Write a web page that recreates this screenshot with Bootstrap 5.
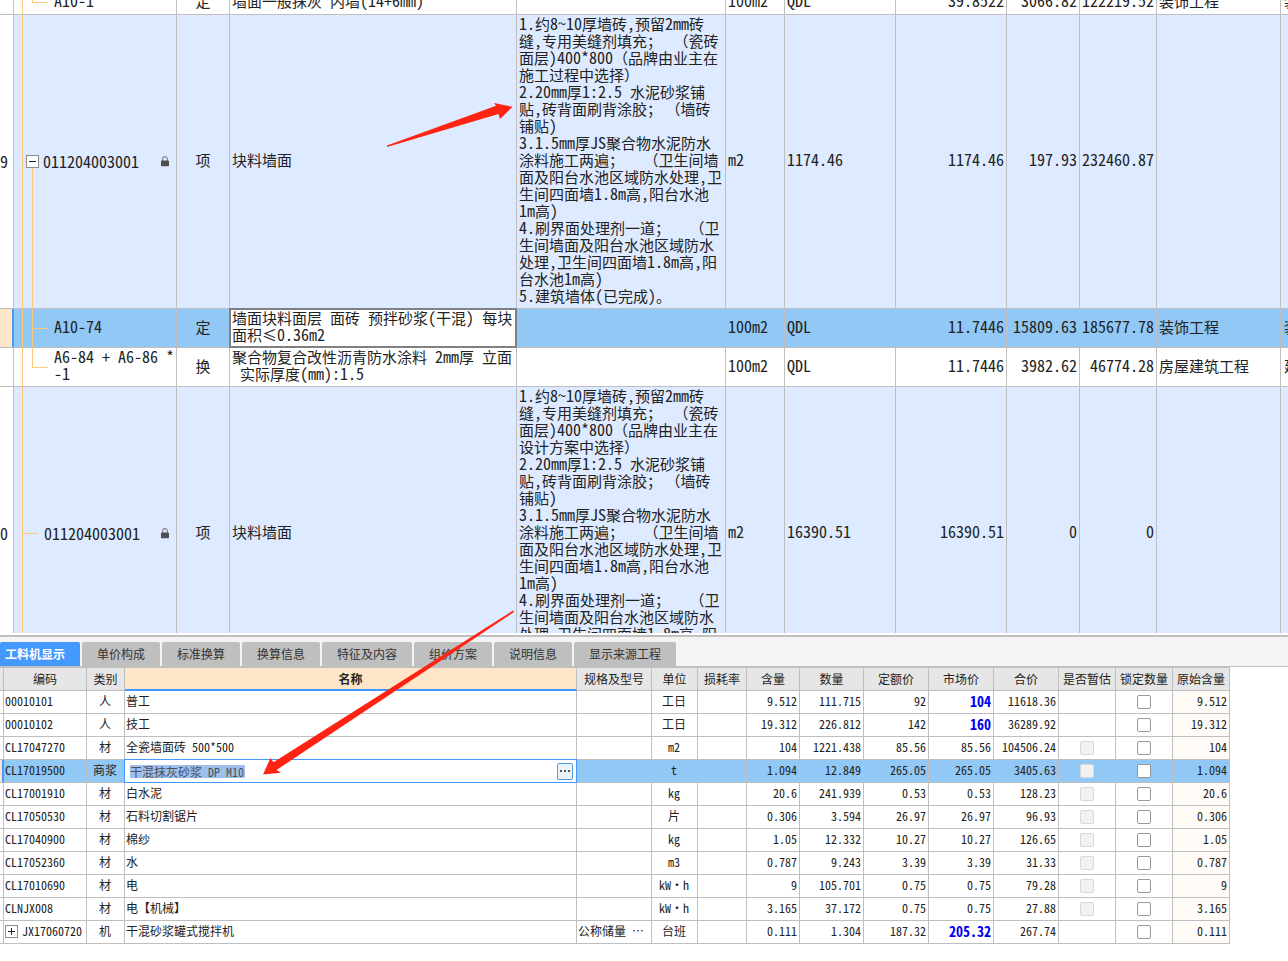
<!DOCTYPE html>
<html lang="zh-CN">
<head>
<meta charset="utf-8">
<meta name="viewport" content="width=device-width, initial-scale=1">
<title>工程计价</title>
<link rel="stylesheet" href="https://cdn.jsdelivr.net/npm/bootstrap@5.3.0/dist/css/bootstrap.min.css">
<style>
:root { --line:#bfbfbf; --ink:#222; --sel:#91c8f6; --accent:#4499ff; --branch:#ffc97d; --peach:#ffe6c8; }
body { font-family:"Noto Sans Mono CJK SC","Noto Sans CJK SC",sans-serif; color:var(--ink); background:#fff; }
.sheet { table-layout:fixed; border-collapse:separate; border-spacing:0; white-space:pre; }
.sheet td, .sheet th { border:0 solid var(--line); border-width:0 1px 1px 0; overflow:hidden; vertical-align:middle; font-weight:400; }

/* bill of quantities */
.bill { font-family:"Noto Sans CJK SC",sans-serif; font-size:15px; line-height:17px; margin-top:-9px; }
.bill td { padding:0 2px 4px 2px; height:39px; }
.bill td:last-child { border-right:0; padding-left:3px; }
.bill .cut td { height:24px; }
.bill .item td { height:294px; background-color:#deeaff; }
.bill .item td.rowno, .bill td.rowno { background-color:#fff; padding:0; }
.bill .n { font-family:"Noto Sans Mono CJK SC","Noto Sans CJK SC",monospace; font-size:16px; line-height:1px; }
.bill .picked td { background-color:var(--sel); }
.bill .picked td.rowno { background-color:var(--peach); border-right-color:var(--accent); box-shadow:inset -1px 0 var(--accent); }
.bill .picked td.cursor { background-color:#fff; position:relative; overflow:visible; }
.cursor::after { content:""; position:absolute; inset:-1px; border:2px solid #808080; pointer-events:none; }
.c0{width:14px}.c1{width:163px}.c2{width:53px}.c3{width:287px}.c4{width:209px}.c5{width:59px}.c6{width:111px}.c7{width:73px}.c8{width:77px}.c9{width:124px}

/* tree branches drawn behind the code column */
.bill td.tree { padding-left:40px; padding-right:0; background-repeat:no-repeat; --b:linear-gradient(var(--branch),var(--branch)); }
.bill td.t-root { padding:0 7px 0 12px; background-image:var(--b),var(--b),var(--b); background-size:1px 100%,4px 1px,1px 50%; background-position:8px 0,8px 50%,18px 100%; }
.bill td.t-mid { background-image:var(--b),var(--b),var(--b); background-size:1px 100%,1px 100%,16px 1px; background-position:8px 0,18px 0,18px 50%; }
.bill td.t-end { background-image:var(--b),var(--b),var(--b); background-size:1px 100%,1px 50%,16px 1px; background-position:8px 0,18px 0,18px 50%; }
.bill td.t-leaf { padding:0 7px 0 30px; background-image:var(--b),var(--b); background-size:1px 100%,16px 1px; background-position:8px 0,8px 50%; }
.toggle { width:13px; height:13px; padding:0; border:1px solid #8c8c8c; background:#fff; display:block; flex:none; line-height:0; }
.toggle svg { display:block; }

/* lower panel */
.panel { border-top:2px solid var(--line); margin-top:2px; padding-bottom:17px; }
.strip { background:#f4f4f4; padding-top:5px; border-bottom:1px solid var(--line); gap:2px; }
.strip .nav-link { font:12px/24px "Noto Sans CJK SC",sans-serif; height:24px; padding:0 15px; border:0; border-radius:2px 2px 0 0; background:#bfbfbf; color:#333; }
.strip .nav-link.active { background:var(--accent); color:#fff; font-weight:700; padding-left:5px; }
.res-wrap { margin-right:58px; }
.res { font-size:12px; line-height:16px; border-top:1px solid var(--line); }
.res td, .res th { height:23px; }
.res td { padding:0 2px 2px 1px; }
.res td:first-child { padding:0; }
.res th { background:#e6e6e6; text-align:center; padding:0; }
.res th.main { background:var(--peach); font-weight:700; border-bottom:2px solid var(--accent); }
.res td:last-child { background:#fffbf7; }
.res .hot { color:#0000f0; font-weight:700; font-size:14px; }
.res .picked td { background:var(--sel); }
.res .picked td:first-child { background:var(--peach); border-right-color:var(--accent); box-shadow:inset -1px 0 var(--accent); }
.res .picked td.edit { background:#fff; position:relative; overflow:visible; padding:0 3px 0 5px; }
.edit::after { content:""; position:absolute; inset:-1px; border:1px solid var(--accent); pointer-events:none; }
.edit input { width:115px; height:13px; padding:0; border:0; outline:0; background:#9fc0ec; color:#4a5058; font:inherit; line-height:13px; border-radius:0; }
.more { width:16px; height:17px; padding:0; border:1px solid #4d9de6; border-radius:2px; background:#ebf2fb; }
.more svg { display:block; }
.res input.form-check-input { width:14px; height:14px; margin:2px auto 0; display:block; border:1px solid #999; border-radius:2px; background-color:#fff; }
.res input.form-check-input:disabled { background-color:#f2f2f2; border-color:#d9d9d9; opacity:1; }
.d0{width:4px}.d1{width:83px}.d2{width:38px}.d4{width:75px}.d5{width:46px}.d6{width:49px}.d7{width:53px}.d8{width:64px}.d9{width:65px}.d12{width:57px}
.marks { pointer-events:none; left:0; top:0; }
.upper { min-height:0; }
</style>
</head>
<body>
<main class="vh-100 d-flex flex-column overflow-hidden position-relative">
<section class="upper flex-fill overflow-hidden">
<table class="sheet bill w-100">
<colgroup><col class="c0"><col class="c1"><col class="c2"><col class="c3"><col class="c4"><col class="c5"><col class="c6"><col class="c6"><col class="c7"><col class="c8"><col class="c9"><col></colgroup>
<tbody>
<tr class="cut"><td class="rowno"></td><td class="tree t-end"><span class="n">A10-1</span></td><td class="text-center">定</td><td>墙面一般抹灰<span class="n"> </span>内墙<span class="n">(14+6mm)</span></td><td></td><td><span class="n">100m2</span></td><td><span class="n">QDL</span></td><td class="text-end"><span class="n">39.8522</span></td><td class="text-end"><span class="n">3066.82</span></td><td class="text-end"><span class="n">122219.52</span></td><td>装饰工程</td><td>装饰</td></tr>
<tr class="item"><td class="rowno"><span class="n">9</span></td><td class="tree t-root"><div class="d-flex align-items-center"><button class="toggle" type="button" aria-label="折叠"><svg width="11" height="11"><path d="M2 5.5h7" stroke="#222"/></svg></button><span class="n ms-1 flex-fill">011204003001</span><svg width="8" height="11" viewBox="0 0 8 11" aria-hidden="true"><path d="M1.6 5V3a2.4 2.4 0 0 1 4.8 0v2" fill="none" stroke="#888" stroke-width="1.2"/><rect y="4.5" width="8" height="5.8" rx=".8" fill="#505050"/></svg></div></td><td class="text-center">项</td><td>块料墙面</td><td><span class="n">1.</span>约<span class="n">8~10</span>厚墙砖<span class="n">,</span>预留<span class="n">2mm</span>砖
缝<span class="n">,</span>专用美缝剂填充； <span class="n"> </span>（瓷砖
面层<span class="n">)400*800</span>（品牌由业主在
施工过程中选择）
<span class="n">2.20mm</span>厚<span class="n">1:2.5 </span>水泥砂浆铺
贴<span class="n">,</span>砖背面刷背涂胶； （墙砖
铺贴<span class="n">)</span>
<span class="n">3.1.5mm</span>厚<span class="n">JS</span>聚合物水泥防水
涂料施工两遍； <span class="n">  </span>（卫生间墙
面及阳台水池区域防水处理<span class="n">,</span>卫
生间四面墙<span class="n">1.8m</span>高<span class="n">,</span>阳台水池
<span class="n">1m</span>高<span class="n">)</span>
<span class="n">4.</span>刷界面处理剂一道； <span class="n">  </span>（卫
生间墙面及阳台水池区域防水
处理<span class="n">,</span>卫生间四面墙<span class="n">1.8m</span>高<span class="n">,</span>阳
台水池<span class="n">1m</span>高<span class="n">)</span>
<span class="n">5.</span>建筑墙体<span class="n">(</span>已完成<span class="n">)</span>。</td><td><span class="n">m2</span></td><td><span class="n">1174.46</span></td><td class="text-end"><span class="n">1174.46</span></td><td class="text-end"><span class="n">197.93</span></td><td class="text-end"><span class="n">232460.87</span></td><td></td><td></td></tr>
<tr class="picked"><td class="rowno"></td><td class="tree t-mid"><span class="n">A10-74</span></td><td class="text-center">定</td><td class="cursor">墙面块料面层<span class="n"> </span>面砖<span class="n"> </span>预拌砂浆<span class="n">(</span>干混<span class="n">) </span>每块
面积≤<span class="n">0.36m2</span></td><td></td><td><span class="n">100m2</span></td><td><span class="n">QDL</span></td><td class="text-end"><span class="n">11.7446</span></td><td class="text-end"><span class="n">15809.63</span></td><td class="text-end"><span class="n">185677.78</span></td><td>装饰工程</td><td>装饰</td></tr>
<tr><td class="rowno"></td><td class="tree t-end"><span class="n">A6-84 + A6-86 *</span>
<span class="n">-1</span></td><td class="text-center">换</td><td>聚合物复合改性沥青防水涂料<span class="n"> 2mm</span>厚<span class="n"> </span>立面
<span class="n"> </span>实际厚度<span class="n">(mm):1.5</span></td><td></td><td><span class="n">100m2</span></td><td><span class="n">QDL</span></td><td class="text-end"><span class="n">11.7446</span></td><td class="text-end"><span class="n">3982.62</span></td><td class="text-end"><span class="n">46774.28</span></td><td>房屋建筑工程</td><td>建筑</td></tr>
<tr class="item"><td class="rowno"><span class="n">0</span></td><td class="tree t-leaf"><div class="d-flex align-items-center"><span class="n flex-fill">011204003001</span><svg width="8" height="11" viewBox="0 0 8 11" aria-hidden="true"><path d="M1.6 5V3a2.4 2.4 0 0 1 4.8 0v2" fill="none" stroke="#888" stroke-width="1.2"/><rect y="4.5" width="8" height="5.8" rx=".8" fill="#505050"/></svg></div></td><td class="text-center">项</td><td>块料墙面</td><td><span class="n">1.</span>约<span class="n">8~10</span>厚墙砖<span class="n">,</span>预留<span class="n">2mm</span>砖
缝<span class="n">,</span>专用美缝剂填充； <span class="n"> </span>（瓷砖
面层<span class="n">)400*800</span>（品牌由业主在
设计方案中选择）
<span class="n">2.20mm</span>厚<span class="n">1:2.5 </span>水泥砂浆铺
贴<span class="n">,</span>砖背面刷背涂胶； （墙砖
铺贴<span class="n">)</span>
<span class="n">3.1.5mm</span>厚<span class="n">JS</span>聚合物水泥防水
涂料施工两遍； <span class="n">  </span>（卫生间墙
面及阳台水池区域防水处理<span class="n">,</span>卫
生间四面墙<span class="n">1.8m</span>高<span class="n">,</span>阳台水池
<span class="n">1m</span>高<span class="n">)</span>
<span class="n">4.</span>刷界面处理剂一道； <span class="n">  </span>（卫
生间墙面及阳台水池区域防水
处理<span class="n">,</span>卫生间四面墙<span class="n">1.8m</span>高<span class="n">,</span>阳
台水池<span class="n">1m</span>高<span class="n">)</span>
<span class="n">5.</span>建筑墙体<span class="n">(</span>已完成<span class="n">)</span>。</td><td><span class="n">m2</span></td><td><span class="n">16390.51</span></td><td class="text-end"><span class="n">16390.51</span></td><td class="text-end"><span class="n">0</span></td><td class="text-end"><span class="n">0</span></td><td></td><td></td></tr>
</tbody>
</table>
</section>

<section class="panel flex-shrink-0">
<nav class="nav strip">
<button type="button" class="nav-link active">工料机显示</button><button type="button" class="nav-link">单价构成</button><button type="button" class="nav-link">标准换算</button><button type="button" class="nav-link">换算信息</button><button type="button" class="nav-link">特征及内容</button><button type="button" class="nav-link">组价方案</button><button type="button" class="nav-link">说明信息</button><button type="button" class="nav-link">显示来源工程</button>
</nav>
<div class="res-wrap">
<table class="sheet res w-100">
<colgroup><col class="d0"><col class="d1"><col class="d2"><col><col class="d4"><col class="d5"><col class="d6"><col class="d7"><col class="d8"><col class="d9"><col class="d9"><col class="d9"><col class="d12"><col class="d12"><col class="d12"></colgroup>
<thead><tr><th></th><th>编码</th><th>类别</th><th class="main">名称</th><th>规格及型号</th><th>单位</th><th>损耗率</th><th>含量</th><th>数量</th><th>定额价</th><th>市场价</th><th>合价</th><th>是否暂估</th><th>锁定数量</th><th>原始含量</th></tr></thead>
<tbody>
<tr><td></td><td>00010101</td><td class="text-center">人</td><td>普工</td><td></td><td class="text-center">工日</td><td></td><td class="text-end">9.512</td><td class="text-end">111.715</td><td class="text-end">92</td><td class="text-end hot">104</td><td class="text-end">11618.36</td><td></td><td><input class="form-check-input" type="checkbox" aria-label="锁定数量"></td><td class="text-end">9.512</td></tr>
<tr><td></td><td>00010102</td><td class="text-center">人</td><td>技工</td><td></td><td class="text-center">工日</td><td></td><td class="text-end">19.312</td><td class="text-end">226.812</td><td class="text-end">142</td><td class="text-end hot">160</td><td class="text-end">36289.92</td><td></td><td><input class="form-check-input" type="checkbox" aria-label="锁定数量"></td><td class="text-end">19.312</td></tr>
<tr><td></td><td>CL17047270</td><td class="text-center">材</td><td>全瓷墙面砖 500*500</td><td></td><td class="text-center">m2</td><td></td><td class="text-end">104</td><td class="text-end">1221.438</td><td class="text-end">85.56</td><td class="text-end">85.56</td><td class="text-end">104506.24</td><td><input class="form-check-input" type="checkbox" disabled aria-label="是否暂估"></td><td><input class="form-check-input" type="checkbox" aria-label="锁定数量"></td><td class="text-end">104</td></tr>
<tr class="picked"><td></td><td>CL17019500</td><td class="text-center">商浆</td><td class="edit"><div class="d-flex align-items-center justify-content-between"><input type="text" value="干混抹灰砂浆 DP M10" aria-label="名称"><button class="more" type="button" aria-label="更多"><svg width="14" height="15"><path d="M2 6h2v2H2zM6 6h2v2H6zM10 6h2v2h-2z" fill="#555"/></svg></button></div></td><td></td><td class="text-center">t</td><td></td><td class="text-end">1.094</td><td class="text-end">12.849</td><td class="text-end">265.05</td><td class="text-end">265.05</td><td class="text-end">3405.63</td><td><input class="form-check-input" type="checkbox" disabled aria-label="是否暂估"></td><td><input class="form-check-input" type="checkbox" aria-label="锁定数量"></td><td class="text-end">1.094</td></tr>
<tr><td></td><td>CL17001910</td><td class="text-center">材</td><td>白水泥</td><td></td><td class="text-center">kg</td><td></td><td class="text-end">20.6</td><td class="text-end">241.939</td><td class="text-end">0.53</td><td class="text-end">0.53</td><td class="text-end">128.23</td><td><input class="form-check-input" type="checkbox" disabled aria-label="是否暂估"></td><td><input class="form-check-input" type="checkbox" aria-label="锁定数量"></td><td class="text-end">20.6</td></tr>
<tr><td></td><td>CL17050530</td><td class="text-center">材</td><td>石料切割锯片</td><td></td><td class="text-center">片</td><td></td><td class="text-end">0.306</td><td class="text-end">3.594</td><td class="text-end">26.97</td><td class="text-end">26.97</td><td class="text-end">96.93</td><td><input class="form-check-input" type="checkbox" disabled aria-label="是否暂估"></td><td><input class="form-check-input" type="checkbox" aria-label="锁定数量"></td><td class="text-end">0.306</td></tr>
<tr><td></td><td>CL17040900</td><td class="text-center">材</td><td>棉纱</td><td></td><td class="text-center">kg</td><td></td><td class="text-end">1.05</td><td class="text-end">12.332</td><td class="text-end">10.27</td><td class="text-end">10.27</td><td class="text-end">126.65</td><td><input class="form-check-input" type="checkbox" disabled aria-label="是否暂估"></td><td><input class="form-check-input" type="checkbox" aria-label="锁定数量"></td><td class="text-end">1.05</td></tr>
<tr><td></td><td>CL17052360</td><td class="text-center">材</td><td>水</td><td></td><td class="text-center">m3</td><td></td><td class="text-end">0.787</td><td class="text-end">9.243</td><td class="text-end">3.39</td><td class="text-end">3.39</td><td class="text-end">31.33</td><td><input class="form-check-input" type="checkbox" disabled aria-label="是否暂估"></td><td><input class="form-check-input" type="checkbox" aria-label="锁定数量"></td><td class="text-end">0.787</td></tr>
<tr><td></td><td>CL17010690</td><td class="text-center">材</td><td>电</td><td></td><td class="text-center">kW·h</td><td></td><td class="text-end">9</td><td class="text-end">105.701</td><td class="text-end">0.75</td><td class="text-end">0.75</td><td class="text-end">79.28</td><td><input class="form-check-input" type="checkbox" disabled aria-label="是否暂估"></td><td><input class="form-check-input" type="checkbox" aria-label="锁定数量"></td><td class="text-end">9</td></tr>
<tr><td></td><td>CLNJX008</td><td class="text-center">材</td><td>电【机械】</td><td></td><td class="text-center">kW·h</td><td></td><td class="text-end">3.165</td><td class="text-end">37.172</td><td class="text-end">0.75</td><td class="text-end">0.75</td><td class="text-end">27.88</td><td><input class="form-check-input" type="checkbox" disabled aria-label="是否暂估"></td><td><input class="form-check-input" type="checkbox" aria-label="锁定数量"></td><td class="text-end">3.165</td></tr>
<tr><td></td><td><div class="d-flex align-items-center"><button class="toggle" type="button" aria-label="展开"><svg width="11" height="11"><path d="M2 5.5h7M5.5 2v7" stroke="#222"/></svg></button><span class="ms-1">JX17060720</span></div></td><td class="text-center">机</td><td>干混砂浆罐式搅拌机</td><td>公称储量 …</td><td class="text-center">台班</td><td></td><td class="text-end">0.111</td><td class="text-end">1.304</td><td class="text-end">187.32</td><td class="text-end hot">205.32</td><td class="text-end">267.74</td><td></td><td><input class="form-check-input" type="checkbox" aria-label="锁定数量"></td><td class="text-end">0.111</td></tr>
</tbody>
</table>
</div>
</section>

<svg class="marks position-absolute" width="520" height="780" viewBox="0 0 520 780" aria-hidden="true"><g fill="#ff2314"><path d="M387 145.6 496 105.7 494 103 512.5 106.8 500 119 498.5 114 387 147z"/><path d="M513 610.6 273.5 762.3 270.5 758 263 774.5 281 772.7 276.5 770 514 612z"/></g></svg>
</main>
<script src="https://cdn.jsdelivr.net/npm/bootstrap@5.3.0/dist/js/bootstrap.bundle.min.js"></script>
</body>
</html>
